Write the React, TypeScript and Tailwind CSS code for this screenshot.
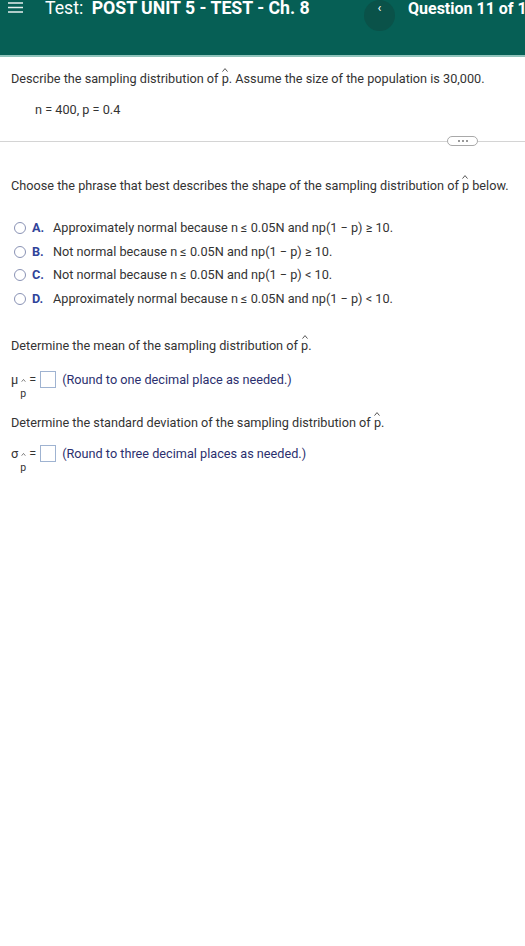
import React from 'react'

function Caret({ className }: { className: string }) {
  return (
    <svg className={className} width="6" height="4" viewBox="0 0 6 4" fill="none" stroke="#444" strokeWidth="0.9">
      <path d="M0.5 3.6L3 0.6L5.5 3.6" />
    </svg>
  )
}

function Hat({ children }: { children: React.ReactNode }) {
  return (
    <span className="relative inline-block">
      {children}
      <Caret className="absolute left-[0.5px] top-[-2px]" />
    </span>
  )
}

function SubHat({ sym }: { sym: string }) {
  return (
    <span className="relative inline-block h-[18px] pr-[9px] leading-[18px]">
      {sym}
      <Caret className="absolute right-[1px] top-[8px] h-[3px] w-[5px]" />
      <span className="absolute right-[1px] top-[17px] text-[10.5px] leading-[11px]">p</span>
    </span>
  )
}

const OPTIONS = [
  { letter: 'A.', text: 'Approximately normal because n ≤ 0.05N and np(1 − p) ≥ 10.' },
  { letter: 'B.', text: 'Not normal because n ≤ 0.05N and np(1 − p) ≥ 10.' },
  { letter: 'C.', text: 'Not normal because n ≤ 0.05N and np(1 − p) < 10.' },
  { letter: 'D.', text: 'Approximately normal because n ≤ 0.05N and np(1 − p) < 10.' },
]

export default function App() {
  return (
    <div className="min-h-[946px] w-[525px] overflow-hidden bg-white font-['Roboto',sans-serif] text-[12.7px] text-[#333]">
      <header className="flex h-[57px] items-start border-b-2 border-[#8fc3bb] bg-[#065f55] leading-[17px] text-white">
        <div className="flex w-[31px] justify-center pt-[2px]">
          <svg width="15" height="11" viewBox="0 0 15 11" fill="none" stroke="#e6f0ee" strokeWidth="1.6">
            <path d="M0 1h15M0 5.5h15M0 10h15" />
          </svg>
        </div>
        <div className="ml-[14px] whitespace-nowrap text-[17.7px]">
          <span>Test:</span> <span className="ml-[4px] font-bold">POST UNIT 5 - TEST - Ch. 8</span>
        </div>
        <div className="ml-auto flex shrink-0 items-start">
          <div className="flex h-[31px] w-[31px] items-start justify-center rounded-full bg-[#0a5249] text-[13px] leading-[16px]">
            ‹
          </div>
          <div className="ml-[13px] w-[117px] overflow-hidden whitespace-nowrap text-[16px] font-bold">
            Question 11 of 14
          </div>
        </div>
      </header>

      <div className="px-[11px] pt-[13px]">
        <p className="leading-[18px]">
          Describe the sampling distribution of <Hat>p</Hat>. Assume the size of the population is 30,000.
        </p>
        <p className="mt-[13px] pl-[24px] leading-[18px]">n = 400, p = 0.4</p>
      </div>

      <div className="mt-[17px] flex items-center">
        <div className="h-px flex-1 bg-[#d4d4d4]" />
        <div className="flex h-[10px] w-[31px] items-center justify-center gap-[2px] rounded-full border border-[#a9a9a9]">
          <span className="h-[2px] w-[2px] rounded-full bg-[#777]" />
          <span className="h-[2px] w-[2px] rounded-full bg-[#777]" />
          <span className="h-[2px] w-[2px] rounded-full bg-[#777]" />
        </div>
        <div className="h-px w-[47px] bg-[#d4d4d4]" />
      </div>

      <div className="px-[11px]">
        <p className="mt-[31px] leading-[18px]">
          Choose the phrase that best describes the shape of the sampling distribution of <Hat>p</Hat> below.
        </p>

        <div className="mt-[24px] flex flex-col gap-[5.5px]">
          {OPTIONS.map((o) => (
            <div key={o.letter} className="flex h-[18px] items-center">
              <span className="ml-[3px] h-[12px] w-[12px] rounded-full border border-[#8a93b5]" />
              <span className="ml-[6px] w-[21px] font-bold text-[#30439a]">{o.letter}</span>
              <span>{o.text}</span>
            </div>
          ))}
        </div>

        <p className="mt-[29px] leading-[18px]">
          Determine the mean of the sampling distribution of <Hat>p</Hat>.
        </p>

        <div className="mt-[16px] flex h-[18px] items-center">
          <SubHat sym="μ" />
          <span className="ml-[2px]">=</span>
          <span className="ml-[4px] h-[17px] w-[16px] border border-[#9fb3d1]" />
          <span className="ml-[6px] text-[#2b2f6e]">(Round to one decimal place as needed.)</span>
        </div>

        <p className="mt-[25px] leading-[18px]">
          Determine the standard deviation of the sampling distribution of <Hat>p</Hat>.
        </p>

        <div className="mt-[13px] flex h-[18px] items-center">
          <SubHat sym="σ" />
          <span className="ml-[2px]">=</span>
          <span className="ml-[4px] h-[17px] w-[16px] border border-[#9fb3d1]" />
          <span className="ml-[6px] text-[#2b2f6e]">(Round to three decimal places as needed.)</span>
        </div>
      </div>
    </div>
  )
}
